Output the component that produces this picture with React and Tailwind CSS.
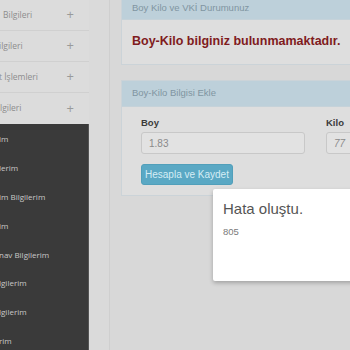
import React from 'react';

const topItems = [
  { label: 'Bilgileri', shift: 'ml-[3px]' },
  { label: 'ilgileri', shift: '-ml-[1px]' },
  { label: 't İşlemleri', shift: '-ml-[1px]' },
  { label: 'lgileri', shift: 'ml-0' },
];

const darkItems = [
  'im',
  'lerim',
  'im Bilgilerim',
  'im',
  'nav Bilgilerim',
  'lgilerim',
  'lgilerim',
  'rim',
];

const App = () => {
  return (
    <div className="w-[350px] h-[350px] overflow-hidden flex bg-[#d8d8d8] font-['Liberation_Sans',Arial,sans-serif]">
      {/* sidebar */}
      <div className="w-[89px] shrink-0 flex flex-col font-['Open_Sans',sans-serif]">
        <div className="bg-[#dcdcdc]">
          {topItems.map((item, i) => (
            <div
              key={i}
              className={`h-[31px] flex items-center justify-between pr-[15px] text-[8.5px] text-[#8d8d8d] ${i < 3 ? 'border-b border-[#d0d0d0]' : ''}`}
            >
              <span className={item.shift}>{item.label}</span>
              <span className="text-[13px] text-[#9a9a9a]">+</span>
            </div>
          ))}
        </div>
        <div className="flex-1 bg-[#3a3a3a] border-r border-[#555] pt-[1px]">
          {darkItems.map((label, i) => (
            <div key={i} className="h-[28.8px] flex items-center text-[8px] text-[#c9c9c9] -ml-[1px]">
              {label}
            </div>
          ))}
        </div>
      </div>

      {/* gutter */}
      <div className="w-[21px] shrink-0 bg-[#dadada] border-r border-[#cfcfcf]" />

      {/* main */}
      <div className="flex-1 pl-[11px] relative">
        <div className="border border-[#cbd3d8] border-t-0 border-r-0 bg-[#dedede] -mr-[10px]">
          <div className="h-[20px] bg-[#bdd0da] border-b border-[#c5d2d9] flex items-center pl-[10px] text-[9.5px] text-[#8095a1] pb-[3px]">
            Boy Kilo ve VKİ Durumunuz
          </div>
          <div className="h-[44px] pl-[10px] pt-[12px] text-[12.5px] font-bold text-[#7f1b20]">
            Boy-Kilo bilginiz bulunmamaktadır.
          </div>
        </div>

        <div className="mt-[15px] border border-[#cbd3d8] border-r-0 bg-[#dedede] -mr-[10px]">
          <div className="h-[26px] bg-[#bdd0da] border-b border-[#c5d2d9] flex items-center pl-[10px] text-[9.5px] text-[#8095a1]">
            Boy-Kilo Bilgisi Ekle
          </div>
          <div className="pl-[19px] pt-[9px] pb-[10px]">
            <div className="flex gap-[21px]">
              <div className="w-[164px]">
                <div className="text-[9.5px] font-bold text-[#3b3b3b] h-[14px] leading-[14px]">Boy</div>
                <div className="mt-[2px] h-[22px] rounded-[3px] border border-[#c8c8c8] bg-[#e2e2e2] flex items-center pl-[7px] text-[10px] text-[#8a8a8a]">
                  1.83
                </div>
              </div>
              <div className="w-[60px]">
                <div className="text-[9.5px] font-bold text-[#3b3b3b] h-[14px] leading-[14px]">Kilo</div>
                <div className="mt-[2px] h-[22px] rounded-[3px] border border-[#c8c8c8] bg-[#e2e2e2] flex items-center pl-[7px] text-[10px] text-[#8a8a8a] italic">
                  77
                </div>
              </div>
            </div>
            <div className="mt-[10px] w-[92px] h-[21px] rounded-[3px] bg-[#5aa8c4] border border-[#519fba] flex items-center justify-center text-[10px] text-[#d5edf5]">
              Hesapla ve Kaydet
            </div>
          </div>
        </div>

        {/* modal */}
        <div className="absolute left-[103px] top-[189px] w-[150px] h-[92px] bg-white rounded-[2px] shadow-[0_2px_4px_rgba(0,0,0,0.25)] pl-[10px] pt-[10px]">
          <div className="text-[15px] text-[#555] leading-[20px]">Hata oluştu.</div>
          <div className="mt-[6px] text-[9.5px] text-[#7a7a7a]">805</div>
        </div>
      </div>
    </div>
  );
};

export default App;
